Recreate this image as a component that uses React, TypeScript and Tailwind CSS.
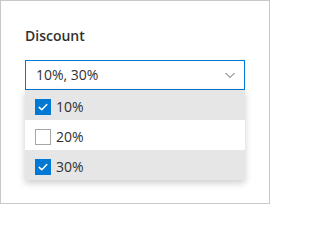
import React from 'react';

interface Option {
  key: string;
  text: string;
  checked: boolean;
}

const OPTIONS: Option[] = [
  { key: '10', text: '10%', checked: true },
  { key: '20', text: '20%', checked: false },
  { key: '30', text: '30%', checked: true },
];

const font = { fontFamily: '"Segoe UI", "Open Sans", "Noto Sans", sans-serif' };

function Checkbox({ checked }: { checked: boolean }) {
  if (!checked) {
    return <span className="block w-4 h-4 border border-[#a6a6a6] bg-white shrink-0" />;
  }
  return (
    <span className="flex items-center justify-center w-4 h-4 bg-[#0078d4] shrink-0">
      <svg width="16" height="16" viewBox="0 0 16 16" fill="none">
        <path d="M4.2 8.4 L6.8 10.8 L11.8 5.6" stroke="#fff" strokeWidth="1.5" strokeLinecap="round" strokeLinejoin="round" />
      </svg>
    </span>
  );
}

export default function App() {
  const selected = OPTIONS.filter((o) => o.checked).map((o) => o.text).join(', ');

  return (
    <div
      className="w-[270px] h-[204px] border border-[#c8c8c8] bg-white px-6 pt-[25px] text-[#323130]"
      style={font}
    >
      <div className="text-[14px] leading-5 font-semibold">Discount</div>

      <div className="mt-[14px] w-[220px]">
        <div className="h-[30px] border border-[#0078d4] flex items-center pl-[10px] pr-[8px]">
          <span className="flex-1 text-[14px] leading-5">{selected}</span>
          <svg width="12" height="12" viewBox="0 0 12 12" fill="none">
            <path d="M1.5 4 L6 8.5 L10.5 4" stroke="#605e5c" strokeWidth="1" />
          </svg>
        </div>

        <div className="bg-white shadow-[0_3px_7px_rgba(0,0,0,0.2)]">
          {OPTIONS.map((o) => (
            <div
              key={o.key}
              className={`h-[30px] flex items-center pl-[10px] pt-1 ${o.checked ? 'bg-[#e6e6e6]' : 'bg-white'}`}
            >
              <Checkbox checked={o.checked} />
              <span className="ml-[5px] text-[14px] leading-5">{o.text}</span>
            </div>
          ))}
        </div>
      </div>
    </div>
  );
}
